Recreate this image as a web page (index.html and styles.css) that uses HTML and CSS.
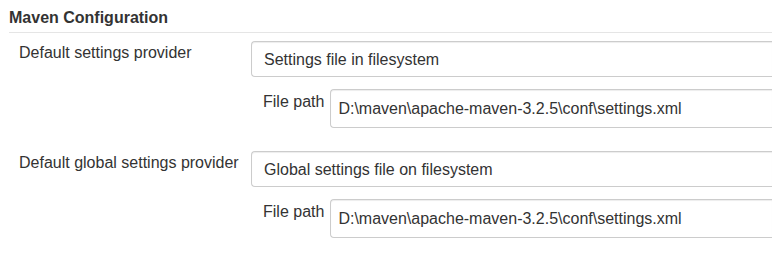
FILE: index.html
```html
<!DOCTYPE html>
<html lang="en">
<head>
  <meta charset="UTF-8" />
  <title>Maven Configuration</title>
  <link rel="stylesheet" href="styles.css">
</head>
<body>
  <div class="section">
    <div class="section-header">Maven Configuration</div>

    <div class="setting-row">
      <label class="setting-name">Default settings provider</label>
      <div class="setting-main">
        <select class="form-control select-control">
          <option>Settings file in filesystem</option>
        </select>
        <div class="sub-row">
          <label class="sub-name">File path</label>
          <input type="text" class="form-control text-control" value="D:\maven\apache-maven-3.2.5\conf\settings.xml">
        </div>
      </div>
    </div>

    <div class="setting-row">
      <label class="setting-name">Default global settings provider</label>
      <div class="setting-main">
        <select class="form-control select-control">
          <option>Global settings file on filesystem</option>
        </select>
        <div class="sub-row">
          <label class="sub-name">File path</label>
          <input type="text" class="form-control text-control" value="D:\maven\apache-maven-3.2.5\conf\settings.xml">
        </div>
      </div>
    </div>
  </div>
</body>
</html>
```

FILE: styles.css
```css
html, body {
  overflow: hidden;
}

body {
  margin: 0;
  padding: 0;
  background: #fff;
  color: #333;
  font-family: "Liberation Sans", Arial, sans-serif;
  font-size: 16px;
  line-height: 20px;
}

.section-header {
  margin-left: 9px;
  padding: 8px 0 4px;
  border-bottom: 1px solid #e5e5e5;
  font-weight: bold;
}

.setting-row {
  display: flex;
  padding-left: 19px;
  margin-top: 8px;
}

.setting-row + .setting-row {
  margin-top: 23px;
}

.setting-name {
  width: 232px;
  flex-shrink: 0;
  padding-top: 2px;
}

.setting-main {
  flex: 1;
  min-width: 0;
  display: flex;
  flex-direction: column;
}

/* the fields run on past the right edge of the window */
.form-control {
  box-sizing: border-box;
  border: 1px solid #ccc;
  border-right: none;
  border-radius: 4px 0 0 4px;
  background: #fff;
  color: #333;
  font-family: inherit;
  font-size: 16px;
  box-shadow: inset 0 1px 1px rgba(0, 0, 0, 0.075);
  outline: none;
  margin: 0;
}

.select-control {
  -webkit-appearance: none;
  appearance: none;
  width: 100%;
  height: 36px;
  padding: 0 12px;
}

.sub-row {
  display: flex;
  margin-top: 12px;
  padding-left: 12px;
}

.sub-name {
  padding-top: 3px;
  margin-right: 6px;
  white-space: nowrap;
}

.text-control {
  flex: 1;
  min-width: 0;
  height: 39px;
  padding: 0 7px;
}
```
